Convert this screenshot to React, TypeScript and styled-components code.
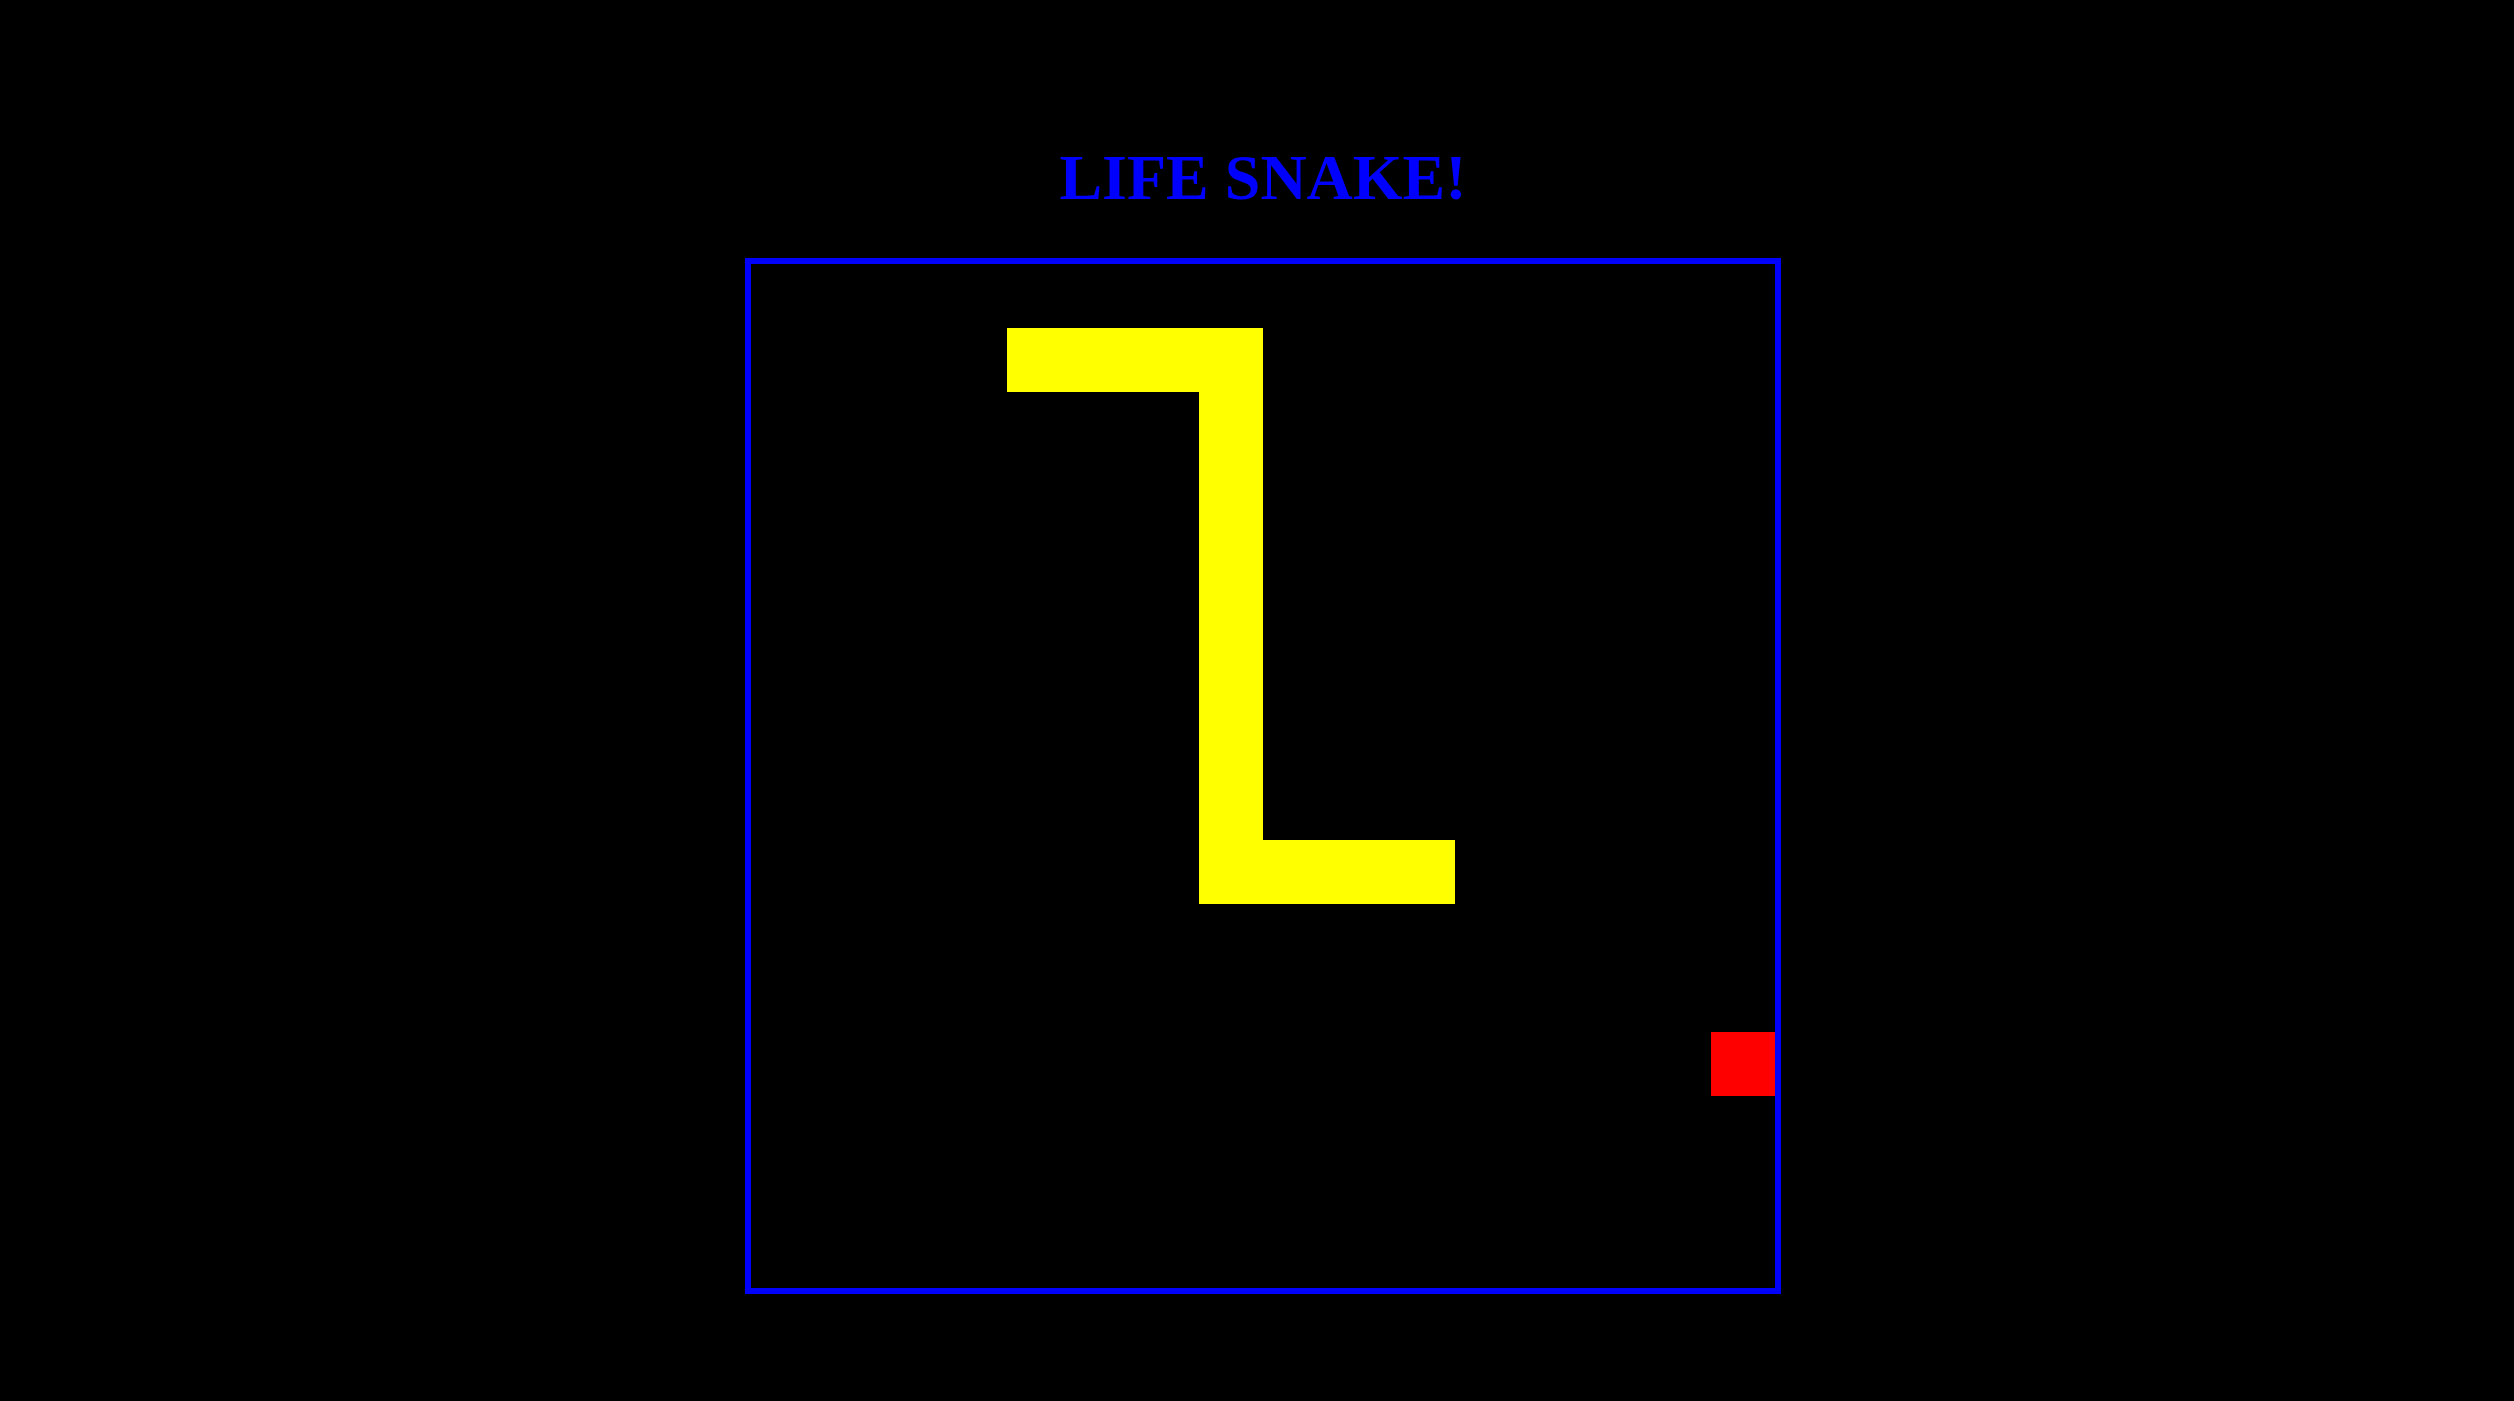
import React from "react";
import styled, { createGlobalStyle } from "styled-components";

const GlobalStyle = createGlobalStyle`
  html, body {
    margin: 0;
    padding: 0;
    background: #000000;
  }
  body {
    font-family: "Liberation Serif", "Times New Roman", serif;
  }
`;

const Page = styled.main`
  min-height: 1401px;
  display: flex;
  flex-direction: column;
  align-items: center;
  background: #000000;
  padding-top: 142px;
  box-sizing: border-box;
`;

const Title = styled.h1`
  margin: 0 0 44px 12px;
  font-family: "Liberation Serif", "Times New Roman", serif;
  font-weight: 700;
  font-size: 64px;
  line-height: 72px;
  color: #0000ff;
  text-align: center;
`;

const Board = styled.div`
  margin-left: 12px;
  display: grid;
  grid-template-columns: repeat(16, 64px);
  grid-template-rows: repeat(16, 64px);
  width: 1024px;
  height: 1024px;
  border: 6px solid #0000ff;
  background: #000000;
`;

const Cell = styled.div<{ $kind: "snake" | "food" }>`
  background: ${(p) => (p.$kind === "snake" ? "#ffff00" : "#ff0000")};
`;

type Pt = [number, number];

const snake: Pt[] = [
  [4, 1], [5, 1], [6, 1], [7, 1],
  [7, 2], [7, 3], [7, 4], [7, 5], [7, 6], [7, 7], [7, 8], [7, 9],
  [8, 9], [9, 9], [10, 9],
];

const food: Pt = [15, 12];

export default function App() {
  return (
    <>
      <GlobalStyle />
      <Page>
        <Title>LIFE SNAKE!</Title>
        <Board>
          {snake.map(([c, r], i) => (
            <Cell
              key={i}
              $kind="snake"
              style={{ gridColumn: c + 1, gridRow: r + 1 }}
            />
          ))}
          <Cell
            $kind="food"
            style={{ gridColumn: food[0] + 1, gridRow: food[1] + 1 }}
          />
        </Board>
      </Page>
    </>
  );
}
